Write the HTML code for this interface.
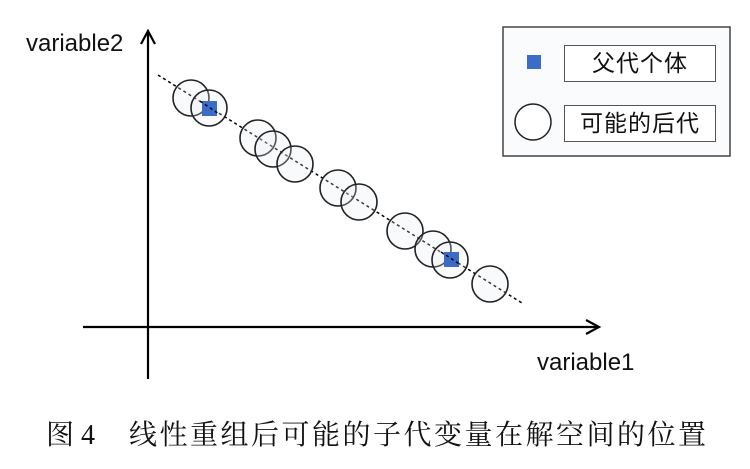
<!DOCTYPE html>
<html><head><meta charset="utf-8"><style>
html,body{margin:0;padding:0;background:#fff;}
body{width:750px;height:469px;position:relative;overflow:hidden;}
.t{position:absolute;font-family:"Liberation Sans","DejaVu Sans",sans-serif;color:#111;white-space:nowrap;}
.cap{position:absolute;top:413px;font-family:"Liberation Serif","Noto Serif CJK SC",serif;font-size:28px;color:#111;white-space:nowrap;}
.lb{position:absolute;border:1.5px solid #555;background:#fff;font-family:"Liberation Sans","Noto Sans CJK SC",sans-serif;font-size:23px;color:#111;text-align:center;line-height:34px;letter-spacing:1px;}
</style></head><body>
<svg width="750" height="469" style="position:absolute;left:0;top:0">
<line x1="148" y1="32" x2="148" y2="379" stroke="#000" stroke-width="2.2"/>
<polyline points="141,44 148,31 155,44" fill="none" stroke="#000" stroke-width="2.2"/>
<line x1="83" y1="327" x2="598" y2="327" stroke="#000" stroke-width="2.2"/>
<polyline points="586,320 599,327 586,334" fill="none" stroke="#000" stroke-width="2.2"/>
<line x1="158" y1="75" x2="522" y2="303" stroke="#000" stroke-width="1.5" stroke-dasharray="3,3"/>
<g fill="rgba(230,235,245,0.25)" stroke="#222" stroke-width="1.6">
<circle cx="191" cy="98" r="18"/><circle cx="209" cy="108" r="18"/>
<circle cx="258" cy="138" r="18"/><circle cx="273" cy="149" r="18"/>
<circle cx="295" cy="164" r="18"/><circle cx="338" cy="188" r="18"/>
<circle cx="359" cy="202" r="18"/><circle cx="405" cy="231" r="18"/>
<circle cx="433" cy="249" r="18"/><circle cx="450" cy="260" r="18"/>
<circle cx="490" cy="284" r="18"/>
</g>
<rect x="202" y="101" width="15" height="15" fill="#3a6cc8"/>
<rect x="444" y="252" width="15" height="15" fill="#3a6cc8"/>
<rect x="503" y="27" width="227" height="129" fill="#fafbfd" stroke="#444" stroke-width="1.5"/>
<rect x="527" y="55" width="14" height="14" fill="#3a6cc8"/>
<circle cx="533" cy="122" r="18" fill="#fff" stroke="#222" stroke-width="1.5"/>
<line x1="200" y1="101" x2="219" y2="114" stroke="#000" stroke-width="1.5" stroke-dasharray="3,3"/>
<line x1="441" y1="252" x2="461" y2="265" stroke="#000" stroke-width="1.5" stroke-dasharray="3,3"/>
</svg>
<div class="lb" style="left:564px;top:45px;width:150px;height:35px;">父代个体</div>
<div class="lb" style="left:564px;top:105px;width:150px;height:35px;">可能的后代</div>
<div class="t" style="left:26px;top:30px;font-size:24px;">variable2</div>
<div class="t" style="left:537px;top:349px;font-size:24px;">variable1</div>
<div class="cap" style="left:46px;">图 4</div>
<div class="cap" style="left:129px;letter-spacing:2.5px;">线性重组后可能的子代变量在解空间的位置</div>
</body></html>
